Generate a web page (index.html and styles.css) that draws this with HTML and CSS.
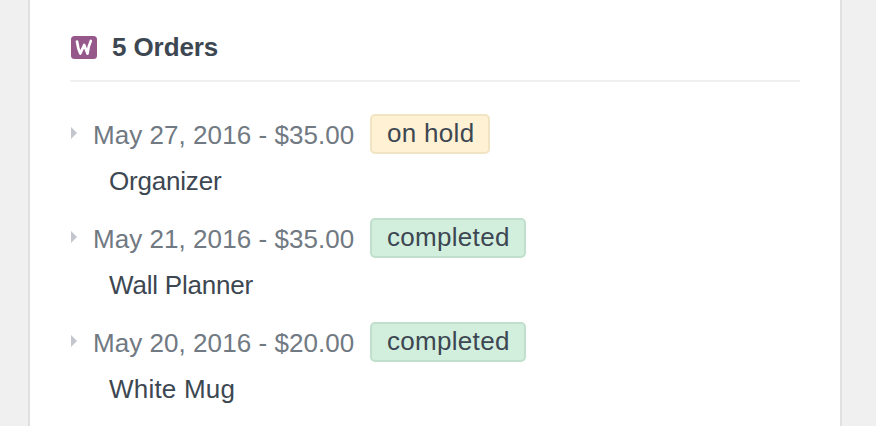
FILE: index.html
```html
<!DOCTYPE html>
<html lang="en">
<head>
  <meta charset="UTF-8">
  <meta name="viewport" content="width=device-width, initial-scale=1.0">
  <title>Orders</title>
  <link rel="stylesheet" href="styles.css">
</head>
<body>
  <div class="card">
    <div class="header">
      <svg class="logo" width="26" height="23" viewBox="0 0 26 23">
        <rect width="26" height="23" rx="3.5" fill="#96588a"/>
        <path d="M6 5.5Q7 13 9.3 17.5L13.2 9L16.5 17.5Q17.3 10 19.8 5" fill="none" stroke="#fff" stroke-width="2.7" stroke-linecap="round" stroke-linejoin="round"/>
      </svg>
      <h1>5 Orders</h1>
    </div>

    <ul class="orders">
      <li class="order">
        <div class="summary">
          <span class="arrow"></span>
          <span class="date">May 27, 2016 - $35.00</span>
          <span class="badge on-hold">on hold</span>
        </div>
        <div class="product">Organizer</div>
      </li>
      <li class="order">
        <div class="summary">
          <span class="arrow"></span>
          <span class="date">May 21, 2016 - $35.00</span>
          <span class="badge completed">completed</span>
        </div>
        <div class="product">Wall Planner</div>
      </li>
      <li class="order">
        <div class="summary">
          <span class="arrow"></span>
          <span class="date">May 20, 2016 - $20.00</span>
          <span class="badge completed">completed</span>
        </div>
        <div class="product wide">White Mug</div>
      </li>
    </ul>
  </div>
</body>
</html>
```

FILE: styles.css
```css
* {
  box-sizing: border-box;
}
body {
  margin: 0;
  padding: 0 34px 0 28px;
  height: 426px;
  overflow: hidden;
  background-color: #f0f0f0;
  color: #3d4752;
  font-family: "Helvetica Neue", Helvetica, "Liberation Sans", Arial, sans-serif;
  font-size: 26px;
}
.card {
  height: 100%;
  padding: 0 40px;
  background-color: #fff;
  border: solid #e0e0e0;
  border-width: 0 2px;
}
.header {
  display: flex;
  align-items: flex-start;
  height: 82px;
  padding: 32px 0 0 1px;
  border-bottom: 2px solid #f0f0f0;
}
.logo {
  margin: 4px 15px 0 0;
}
h1 {
  margin: 0;
  font-size: 26px;
  line-height: 30px;
  letter-spacing: -0.1px;
}
.orders {
  margin: 0;
  padding: 32px 0 0;
  list-style: none;
}
.order {
  height: 104px;
}
.summary {
  display: flex;
  height: 40px;
}
.arrow {
  width: 0;
  height: 0;
  margin: 13px 16px 0 1px;
  border: solid transparent;
  border-width: 6px 0 6px 6px;
  border-left-color: #c3c6cf;
}
.date {
  width: 277px;
  padding-top: 6px;
  color: #717982;
  line-height: 30px;
  letter-spacing: 0.05px;
  white-space: nowrap;
}
.badge {
  height: 40px;
  padding: 2px 14px 2px 15px;
  border: 2px solid;
  border-radius: 5px;
  line-height: 30px;
  letter-spacing: 0.3px;
}
.on-hold {
  background-color: #fff2d4;
  border-color: #f1e4c3;
}
.completed {
  background-color: #d2eedd;
  border-color: #c0dfcc;
}
.product {
  padding: 12px 0 0 39px;
  line-height: 30px;
  letter-spacing: -0.2px;
}
.product.wide {
  letter-spacing: 0.2px;
}
```
